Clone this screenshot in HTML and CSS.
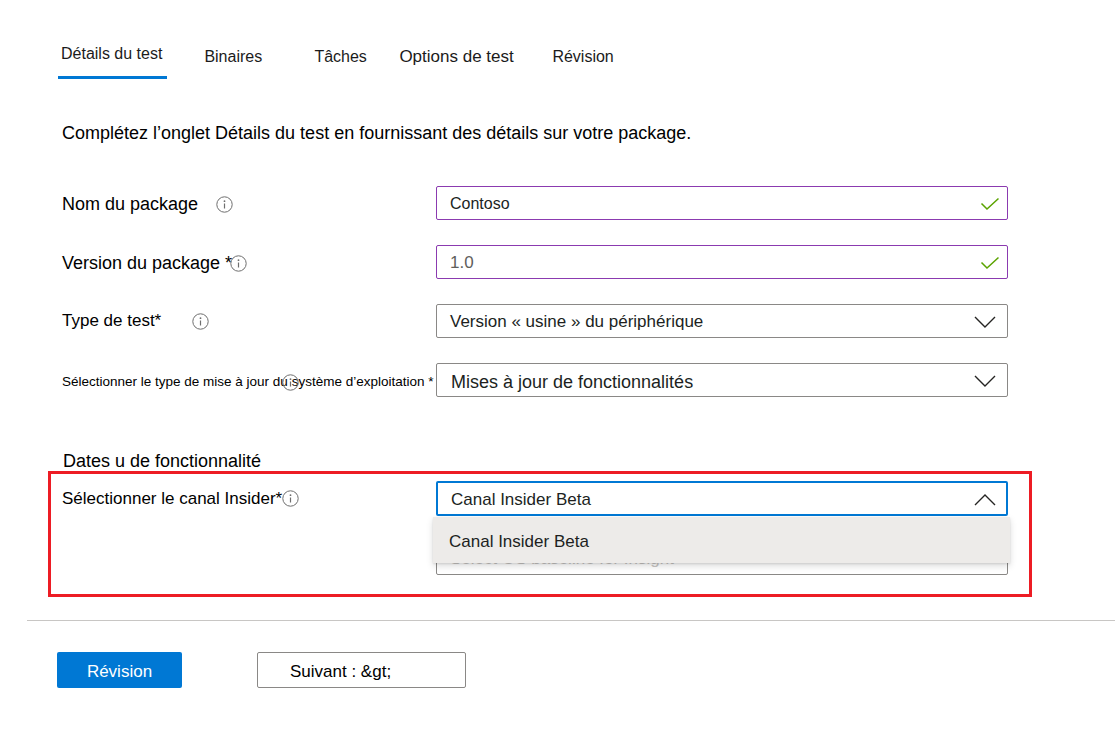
FILE: index.html
```html
<!DOCTYPE html>
<html lang="fr">
<head>
<meta charset="utf-8">
<title>Détails du test</title>
<link rel="stylesheet" href="styles.css">
</head>
<body>
<nav class="tabs">
  <div class="tab active">Détails du test</div>
  <div class="tab">Binaires</div>
  <div class="tab">Tâches</div>
  <div class="tab">Options de test</div>
  <div class="tab">Révision</div>
</nav>

<p class="intro">Complétez l’onglet Détails du test en fournissant des détails sur votre package.</p>

<div class="form">
  <div class="row">
    <div class="lbl lbl-lg">Nom du package
      <svg class="info info-gap1" width="17" height="17" viewBox="0 0 17 17"><circle cx="8.5" cy="8.5" r="7.7" fill="none" stroke="#6e6e6e" stroke-width="1"/><circle cx="8.5" cy="5.2" r="0.9" fill="#6e6e6e"/><path d="M8.5 7.5v5" stroke="#6e6e6e" stroke-width="1.2"/></svg>
    </div>
    <div class="field valid">
      <span>Contoso</span>
      <svg class="check" width="20" height="14" viewBox="0 0 20 14"><polyline points="1.5,6.5 7,12 18.5,1.5" fill="none" stroke="#5ba300" stroke-width="1.5"/></svg>
    </div>
  </div>

  <div class="row">
    <div class="lbl lbl-lg">Version du package *
      <svg class="info info-gap2" width="17" height="17" viewBox="0 0 17 17"><circle cx="8.5" cy="8.5" r="7.7" fill="none" stroke="#6e6e6e" stroke-width="1"/><circle cx="8.5" cy="5.2" r="0.9" fill="#6e6e6e"/><path d="M8.5 7.5v5" stroke="#6e6e6e" stroke-width="1.2"/></svg>
    </div>
    <div class="field valid">
      <span class="muted">1.0</span>
      <svg class="check" width="20" height="14" viewBox="0 0 20 14"><polyline points="1.5,6.5 7,12 18.5,1.5" fill="none" stroke="#5ba300" stroke-width="1.5"/></svg>
    </div>
  </div>

  <div class="row">
    <div class="lbl lbl-md">Type de test*
      <svg class="info info-gap3" width="17" height="17" viewBox="0 0 17 17"><circle cx="8.5" cy="8.5" r="7.7" fill="none" stroke="#6e6e6e" stroke-width="1"/><circle cx="8.5" cy="5.2" r="0.9" fill="#6e6e6e"/><path d="M8.5 7.5v5" stroke="#6e6e6e" stroke-width="1.2"/></svg>
    </div>
    <div class="field select">
      <span class="val-md">Version « usine » du périphérique</span>
      <svg class="chev" width="22" height="12" viewBox="0 0 22 12"><polyline points="1,1 11,11 21,1" fill="none" stroke="#252423" stroke-width="1.4"/></svg>
    </div>
  </div>

  <div class="row">
    <div class="lbl lbl-sm">Sélectionner le type de mise à jour du système d’exploitation *
      <svg class="info info-over" width="17" height="17" viewBox="0 0 17 17"><circle cx="8.5" cy="8.5" r="7.7" fill="none" stroke="#6e6e6e" stroke-width="1"/><circle cx="8.5" cy="5.2" r="0.9" fill="#6e6e6e"/><path d="M8.5 7.5v5" stroke="#6e6e6e" stroke-width="1.2"/></svg>
    </div>
    <div class="field select">
      <span class="val-lg">Mises à jour de fonctionnalités</span>
      <svg class="chev" width="22" height="12" viewBox="0 0 22 12"><polyline points="1,1 11,11 21,1" fill="none" stroke="#252423" stroke-width="1.4"/></svg>
    </div>
  </div>
</div>

<h3 class="section">Dates u de fonctionnalité</h3>

<div class="highlight">
  <div class="row">
    <div class="lbl lbl-md">Sélectionner le canal Insider*
      <svg class="info" width="17" height="17" viewBox="0 0 17 17"><circle cx="8.5" cy="8.5" r="7.7" fill="none" stroke="#6e6e6e" stroke-width="1"/><circle cx="8.5" cy="5.2" r="0.9" fill="#6e6e6e"/><path d="M8.5 7.5v5" stroke="#6e6e6e" stroke-width="1.2"/></svg>
    </div>
    <div class="combo">
      <div class="field focus">
        <span class="val-md">Canal Insider Beta</span>
        <svg class="chev" width="22" height="12" viewBox="0 0 22 12"><polyline points="1,11 11,1 21,11" fill="none" stroke="#252423" stroke-width="1.4"/></svg>
      </div>
      <div class="menu">Canal Insider Beta</div>
    </div>
  </div>
  <div class="row row-last">
    <div></div>
    <div class="field ghost"><span>Select OS baseline for Insight</span></div>
  </div>
</div>

<div class="footer">
  <div class="actions">
    <div class="btn primary">Révision</div>
    <div class="btn secondary">Suivant : &amp;gt;</div>
  </div>
</div>
</body>
</html>
```

FILE: styles.css
```css
* { box-sizing: border-box; }

body {
  margin: 0;
  width: 1115px;
  height: 729px;
  overflow: hidden;
  background: #fff;
  color: #000;
  font-family: "Liberation Sans", Arial, sans-serif;
}

.tabs {
  display: flex;
  align-items: flex-start;
  margin-left: 58px;
  height: 79px;
}

.tab {
  padding: 47px 3px 0;
  font-size: 16px;
  line-height: 20px;
  color: #1b1b1b;
  white-space: nowrap;
}

.tab.active {
  padding: 44px 5px 12px 3px;
  border-bottom: 3px solid #0078d4;
  margin-right: 34px;
}

.tab:nth-child(2) { width: 110px; }
.tab:nth-child(3) { width: 85px; }
.tab:nth-child(4) { width: 153px; font-size: 17px; }

.intro {
  margin: 44px 0 0 62px;
  font-size: 18px;
  line-height: 20px;
  color: #000;
}

.form {
  margin: 43px 0 0 62px;
}

.row {
  display: grid;
  grid-template-columns: 374px 572px;
  align-items: center;
  margin-bottom: 25px;
}

.row-last { margin-bottom: 0; }

.lbl {
  position: relative;
  display: flex;
  align-items: center;
  white-space: nowrap;
  color: #000;
}

.lbl-lg { font-size: 18px; padding-top: 3px; }
.lbl-md { font-size: 17px; }
.lbl-sm { font-size: 13.5px; padding-top: 2px; }

.info { flex: none; }
.info-gap1 { margin-left: 18px; }
.info-gap2 { margin-left: -2px; }
.info-gap3 { margin-left: 31px; }
.info-over {
  position: absolute;
  left: 220px;
  top: 2px;
}

.field {
  height: 34px;
  border: 1px solid #8a8886;
  border-radius: 2px;
  background: #fff;
  display: flex;
  align-items: center;
  justify-content: space-between;
  padding: 2px 11px 0 13px;
  font-size: 16px;
  color: #201f1e;
}

.field.valid {
  border-color: #8b3ab0;
  padding-right: 7px;
}

.muted { color: #605e5c; font-size: 17px; }
.val-md { font-size: 17px; }
.val-lg { font-size: 18px; padding-left: 1px; padding-top: 2px; }

.section {
  margin: 55px 0 0 63px;
  font-size: 18px;
  line-height: 19px;
  font-weight: normal;
  color: #000;
}

.highlight {
  margin-left: 48px;
  width: 984px;
  border: 3px solid #ed1c24;
  padding: 7px 0 19px 11px;
}

.combo { position: relative; }

.field.focus {
  height: 35px;
  border: 2px solid #0078d4;
  padding: 2px 10px 0 13px;
}

.menu {
  position: absolute;
  top: 36px;
  left: -3px;
  width: 577px;
  height: 46px;
  display: flex;
  align-items: center;
  padding-left: 16px;
  padding-top: 4px;
  background: #edebe9;
  font-size: 17px;
  color: #201f1e;
  box-shadow: 0 3px 7px rgba(0, 0, 0, 0.14), 0 1px 2px rgba(0, 0, 0, 0.1);
  z-index: 2;
}

.field.ghost {
  color: #c8c6c4;
  font-size: 17px;
}

.footer {
  margin: 23px 0 0 27px;
  border-top: 1px solid #c8c6c4;
}

.actions {
  display: flex;
  gap: 75px;
  margin: 31px 0 0 30px;
}

.btn {
  height: 36px;
  border-radius: 2px;
  font-size: 17px;
  display: flex;
  align-items: center;
  padding-top: 3px;
}

.primary {
  width: 125px;
  justify-content: center;
  background: #0078d4;
  color: #fff;
}

.secondary {
  width: 209px;
  padding-left: 32px;
  border: 1px solid #8a8886;
  color: #000;
}
```
